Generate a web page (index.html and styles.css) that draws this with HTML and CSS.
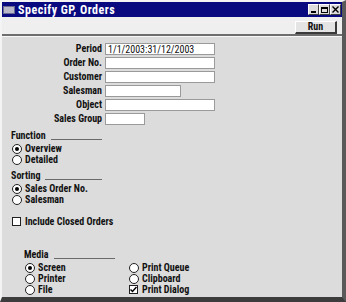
FILE: index.html
```html
<!DOCTYPE html>
<html lang="en">
	<head>
		<meta charset="UTF-8" />
		<title>Specify GP, Orders</title>
		<link rel="stylesheet" href="styles.css">
	</head>
	<body>
		<div class="window">
			<div class="titlebar">
				<span class="app_icon"></span>
				<span class="title">Specify GP, Orders</span>
				<div class="controls">
					<span class="ctl ctl_min"></span>
					<span class="ctl ctl_max"></span>
					<span class="ctl ctl_close">
						<svg width="7" height="7" viewBox="0 0 7 7"><path d="M0.5 0.5 L6.5 6.5 M6.5 0.5 L0.5 6.5" stroke="#000" stroke-width="1.4"/></svg>
					</span>
				</div>
			</div>
			<div class="toolbar">
				<button class="run">Run</button>
			</div>
			<div class="content">
				<div class="fields">
					<label>Period</label>
					<div class="input w_long">1/1/2003:31/12/2003</div>
					<label>Order No.</label>
					<div class="input w_long"></div>
					<label>Customer</label>
					<div class="input w_long"></div>
					<label>Salesman</label>
					<div class="input w_mid"></div>
					<label>Object</label>
					<div class="input w_long"></div>
					<label>Sales Group</label>
					<div class="input w_short"></div>
				</div>

				<div class="group">
					<div class="group_head"><span>Function</span><i></i></div>
					<div class="opt"><span class="radio on"></span>Overview</div>
					<div class="opt"><span class="radio"></span>Detailed</div>
				</div>

				<div class="group">
					<div class="group_head"><span>Sorting</span><i></i></div>
					<div class="opt"><span class="radio on"></span>Sales Order No.</div>
					<div class="opt"><span class="radio"></span>Salesman</div>
				</div>

				<div class="opt closed"><span class="check"></span>Include Closed Orders</div>

				<div class="group media">
					<div class="group_head"><span>Media</span><i></i></div>
					<div class="media_cols">
						<div class="media_col">
							<div class="opt"><span class="radio on"></span>Screen</div>
							<div class="opt"><span class="radio"></span>Printer</div>
							<div class="opt"><span class="radio"></span>File</div>
						</div>
						<div class="media_col">
							<div class="opt"><span class="radio"></span>Print Queue</div>
							<div class="opt"><span class="radio"></span>Clipboard</div>
							<div class="opt"><span class="check on">
								<svg width="7" height="7" viewBox="0 0 7 7"><path d="M0.5 3.5 L2.5 5.5 L6.5 1" fill="none" stroke="#000" stroke-width="1.5"/></svg>
							</span>Print Dialog</div>
						</div>
					</div>
				</div>
			</div>
		</div>
	</body>
</html>
```

FILE: styles.css
```css
body{
	margin: 0;
	font: bold 10px/1 "Roboto Condensed", "Liberation Sans", Arial, sans-serif;
	color: #111;
	background: #dcdcdc;
}
div.window{
	width: 346px;
	height: 302px;
	box-sizing: border-box;
	border-style: solid;
	border-width: 2px 4px 5px 2px;
	border-color: #f4f4f4 #5a5a5a #3c3c3c #f4f4f4;
	display: flex;
	flex-direction: column;
	background: #dcdcdc;
	overflow: hidden;
}

/* title bar */
div.titlebar{
	height: 15px;
	background: #0a0a80;
	color: #fff;
	display: flex;
	align-items: center;
	padding-left: 1px;
}
span.app_icon{
	width: 12px;
	height: 8px;
	background: #b8b8c8;
	border: 1px solid #6a6a90;
	box-sizing: border-box;
}
span.title{
	font-size: 12px;
	margin-left: 3px;
	letter-spacing: 0.5px;
}
div.controls{
	margin-left: auto;
	display: flex;
	margin-right: 1px;
}
span.ctl{
	width: 11px;
	height: 11px;
	box-sizing: border-box;
	background: #dcdcdc;
	border: 1px solid;
	border-color: #fff #404040 #404040 #fff;
	display: flex;
	align-items: center;
	justify-content: center;
	position: relative;
}
span.ctl_min::after{
	content: "";
	position: absolute;
	left: 2px;
	bottom: 1px;
	width: 5px;
	height: 2px;
	background: #000;
}
span.ctl_max::after{
	content: "";
	width: 7px;
	height: 6px;
	box-sizing: border-box;
	border: 1px solid #000;
	border-top-width: 2px;
}

/* toolbar */
div.toolbar{
	height: 17px;
	background: #efefef;
	border-bottom: 2px solid #6e6e6e;
	display: flex;
	align-items: center;
	justify-content: flex-end;
	padding-right: 5px;
}
button.run{
	width: 42px;
	height: 13px;
	padding: 0;
	margin-top: 3px;
	font: inherit;
	color: #111;
	background: #e4e4e4;
	border: 1px solid;
	border-width: 1px 2px 2px 1px;
	border-color: #fff #3a3a3a #3a3a3a #fff;
	box-sizing: border-box;
}

/* form content */
div.content{
	flex: 1;
	padding: 6px 0 0 9px;
	border-top: 1px solid #f8f8f8;
}
div.fields{
	display: grid;
	grid-template-columns: 91px auto;
	grid-auto-rows: 12px;
	row-gap: 2px;
	column-gap: 3px;
	align-items: center;
}
div.fields label{
	text-align: right;
}
div.input{
	height: 12px;
	box-sizing: border-box;
	background: #fff;
	border: 1px solid #9a9a9a;
	font-weight: normal;
	padding: 1px 0 0 2px;
	line-height: 10px;
}
div.w_long{ width: 110px; }
div.w_mid{ width: 76px; }
div.w_short{ width: 40px; }

div.group{
	margin-top: 6px;
	width: 91px;
}
div.group_head{
	height: 10px;
	display: flex;
	align-items: flex-end;
	margin-bottom: 2px;
}
div.group_head i{
	flex: 1;
	margin-left: 5px;
	margin-bottom: 1px;
	border-bottom: 1px solid #6a6a6a;
}
div.opt{
	height: 11px;
	display: flex;
	align-items: center;
	white-space: nowrap;
}
span.radio{
	width: 10px;
	height: 10px;
	box-sizing: border-box;
	border: 1px solid #202020;
	border-radius: 50%;
	background: #fff;
	margin: 0 3px 0 1px;
	display: flex;
	align-items: center;
	justify-content: center;
}
span.radio.on::after{
	content: "";
	width: 4px;
	height: 4px;
	border-radius: 50%;
	background: #000;
}
span.check{
	width: 9px;
	height: 9px;
	box-sizing: border-box;
	border: 1px solid #202020;
	background: #fff;
	margin: 0 4px 0 1px;
	display: flex;
	align-items: center;
	justify-content: center;
}
div.closed{
	margin-top: 11px;
}
div.media{
	margin: 23px 0 0 13px;
	width: 91px;
}
div.media_cols{
	display: flex;
}
div.media_col{
	width: 104px;
	flex: none;
}
```
